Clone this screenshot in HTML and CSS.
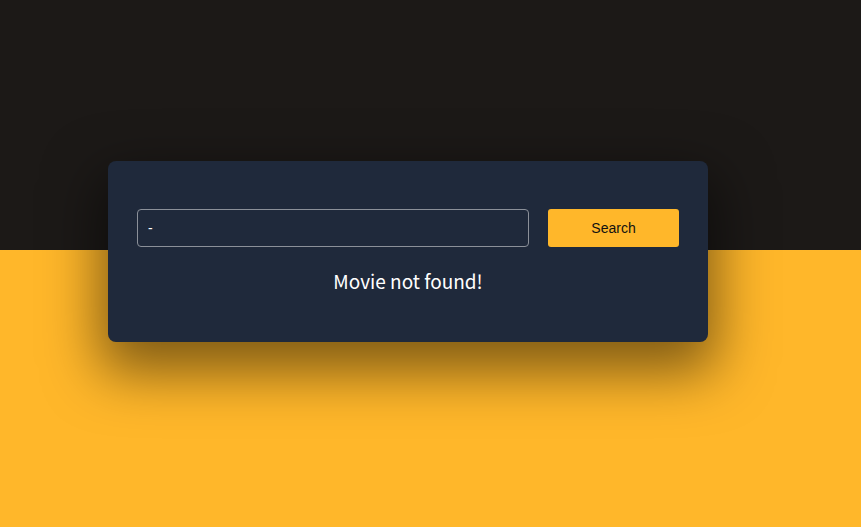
FILE: index.html
```html
<!DOCTYPE html>
<html>
<head>
<meta charset="utf-8">
<link rel="stylesheet" href="styles.css">
</head>
<body>
<div class="top"></div>
<main class="card">
  <form class="search">
    <input class="field" type="text" value="-">
    <button class="btn" type="button">Search</button>
  </form>
  <p class="msg">Movie not found!</p>
</main>
</body>
</html>
```
FILE: styles.css
```css
html, body { margin: 0; padding: 0; }
body {
  width: 861px;
  height: 527px;
  overflow: hidden;
  background: linear-gradient(to bottom, #1c1917 0, #1c1917 250px, #ffb72a 250px, #ffb72a 100%);
  font-family: "Liberation Sans", Arial, sans-serif;
}
.top { height: 161px; }
.card {
  margin-left: 108px;
  width: 600px;
  height: 181px;
  box-sizing: border-box;
  padding: 48px 29px 0 29px;
  background: #1f293b;
  border-radius: 8px;
  box-shadow: 0 22px 55px 8px rgba(0, 0, 0, 0.5);
}
.search {
  display: flex;
  gap: 19px;
  margin: 0;
}
.field {
  flex: 1;
  height: 38px;
  box-sizing: border-box;
  border: 1px solid #8b9099;
  border-radius: 4px;
  background: transparent;
  color: #ffffff;
  font-family: "Liberation Sans", Arial, sans-serif;
  font-size: 14px;
  padding: 0 10px;
  outline: none;
}
.btn {
  width: 131px;
  height: 38px;
  border: none;
  border-radius: 3px;
  background: #ffb72a;
  color: #111;
  font-family: "Liberation Sans", Arial, sans-serif;
  font-size: 14px;
  padding: 0;
}
.msg {
  margin: 21px 0 0 0;
  text-align: center;
  color: #ffffff;
  font-family: "Noto Sans CJK KR", "Noto Sans", sans-serif;
  font-size: 19px;
  line-height: 26px;
}
```
